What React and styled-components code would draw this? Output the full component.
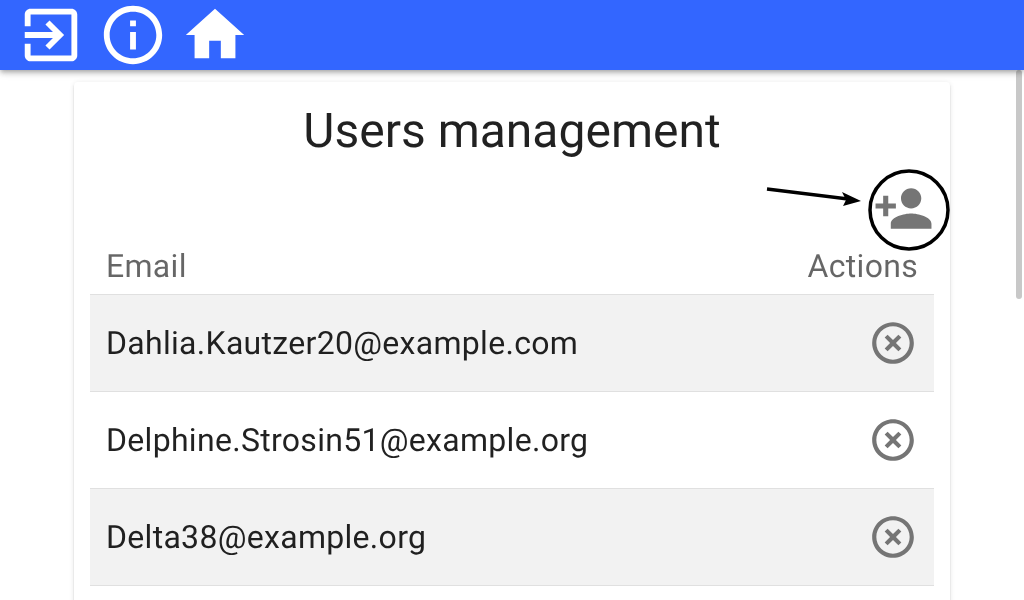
import styled, { createGlobalStyle } from 'styled-components';

const GlobalStyle = createGlobalStyle`
  html, body {
    margin: 0;
    height: 100%;
    overflow: hidden;
    background: #fff;
    font-family: Roboto, "Liberation Sans", sans-serif;
    color: rgba(0, 0, 0, 0.87);
    text-rendering: geometricPrecision;
  }
`;

const TopBar = styled.header`
  position: relative;
  z-index: 2;
  display: flex;
  gap: 12px;
  height: 70px;
  padding-left: 16px;
  background: #3366ff;
  box-shadow: 0 2px 4px -1px rgba(0,0,0,.2), 0 4px 5px 0 rgba(0,0,0,.14), 0 1px 10px 0 rgba(0,0,0,.12);
`;

const BarIcon = styled.svg`
  width: 70px;
  height: 70px;
  fill: #fff;
`;

const Page = styled.div`
  height: 530px;
  overflow: hidden;
`;

const Card = styled.main`
  box-sizing: border-box;
  width: 876px;
  margin: 12px auto 0;
  padding: 0 16px 60px;
  background: #fff;
  border-radius: 4px;
  box-shadow: 0 3px 1px -2px rgba(0,0,0,.2), 0 2px 2px 0 rgba(0,0,0,.14), 0 1px 5px 0 rgba(0,0,0,.12);
  will-change: transform;
`;

const Title = styled.h1`
  margin: 0;
  padding-top: 18px;
  height: 62px;
  font-size: 48px;
  line-height: 62px;
  font-weight: 400;
  text-align: center;
`;

const AddRow = styled.div`
  position: relative;
  display: flex;
  justify-content: flex-end;
  align-items: flex-start;
  height: 62px;
  margin-top: 8px;
  padding-top: 8px;
`;

const AddIcon = styled.svg`
  width: 61px;
  height: 61px;
  fill: #757575;
`;

const Annotation = styled.svg`
  position: absolute;
  top: -1px;
  right: -16px;
  width: 200px;
  height: 84px;
  overflow: visible;
`;

const HeadRow = styled.div`
  display: flex;
  justify-content: space-between;
  align-items: center;
  height: 52px;
  padding: 0 16px 2px;
  font-size: 32px;
  letter-spacing: 0.3px;
  color: rgba(0, 0, 0, 0.6);
  border-bottom: 1px solid #e0e0e0;
`;

const Row = styled.div`
  display: flex;
  justify-content: space-between;
  align-items: center;
  height: 96px;
  padding: 0 16px;
  font-size: 32px;
  letter-spacing: 0.3px;
  background: ${p => (p.$shaded ? '#f2f2f2' : '#fff')};
  border-bottom: 1px solid #e0e0e0;
`;

const RemoveIcon = styled.svg`
  width: 50px;
  height: 50px;
  fill: #757575;
`;

const ScrollThumb = styled.div`
  position: fixed;
  z-index: 1;
  top: 70px;
  right: 2px;
  width: 6px;
  height: 229px;
  border-radius: 3px;
  background: #c8c8c8;
`;

const users = [
  'Dahlia.Kautzer20@example.com',
  'Delphine.Strosin51@example.org',
  'Delta38@example.org',
];

export default function App() {
  return (
    <>
      <GlobalStyle />
      <TopBar>
        <BarIcon viewBox="0 0 24 24"><path d="M10.09 15.59L11.5 17l5-5-5-5-1.41 1.41L12.67 11H3v2h9.67l-2.58 2.59zM19 3H5c-1.11 0-2 .9-2 2v4h2V5h14v14H5v-4H3v4c0 1.1.89 2 2 2h14c1.1 0 2-.9 2-2V5c0-1.1-.9-2-2-2z" /></BarIcon>
        <BarIcon viewBox="0 0 24 24"><path d="M11 7h2v2h-2zm0 4h2v6h-2zm1-9C6.48 2 2 6.48 2 12s4.48 10 10 10 10-4.48 10-10S17.52 2 12 2zm0 18c-4.41 0-8-3.59-8-8s3.59-8 8-8 8 3.59 8 8-3.59 8-8 8z" /></BarIcon>
        <BarIcon viewBox="0 0 24 24"><path d="M10 20v-6h4v6h5v-8h3L12 3 2 12h3v8z" /></BarIcon>
      </TopBar>
      <Page>
        <Card>
          <Title>Users management</Title>
          <AddRow>
            <AddIcon viewBox="0 0 24 24"><path d="M15 12c2.21 0 4-1.79 4-4s-1.79-4-4-4-4 1.79-4 4 1.79 4 4 4zm-9-2V7H4v3H1v2h3v3h2v-3h3v-2H6zm9 4c-2.67 0-8 1.34-8 4v2h16v-2c0-2.66-5.33-4-8-4z" /></AddIcon>
            <Annotation viewBox="0 0 200 84">
              <circle cx="159" cy="41" r="39" fill="none" stroke="#000" strokeWidth="3.5" />
              <path d="M17 20 L98 30" fill="none" stroke="#000" strokeWidth="3.5" />
              <path d="M111 32 L92 23 L96 31 L93 37 Z" fill="#000" />
            </Annotation>
          </AddRow>
          <HeadRow>
            <span>Email</span>
            <span>Actions</span>
          </HeadRow>
          {users.map((email, i) => (
            <Row key={email} $shaded={i % 2 === 0}>
              <span>{email}</span>
              <RemoveIcon viewBox="0 0 24 24"><path d="M14.59 8L12 10.59 9.41 8 8 9.41 10.59 12 8 14.59 9.41 16 12 13.41 14.59 16 16 14.59 13.41 12 16 9.41 14.59 8zM12 2C6.47 2 2 6.47 2 12s4.47 10 10 10 10-4.47 10-10S17.53 2 12 2zm0 18c-4.41 0-8-3.59-8-8s3.59-8 8-8 8 3.59 8 8-3.59 8-8 8z" /></RemoveIcon>
            </Row>
          ))}
        </Card>
      </Page>
      <ScrollThumb />
    </>
  );
}
